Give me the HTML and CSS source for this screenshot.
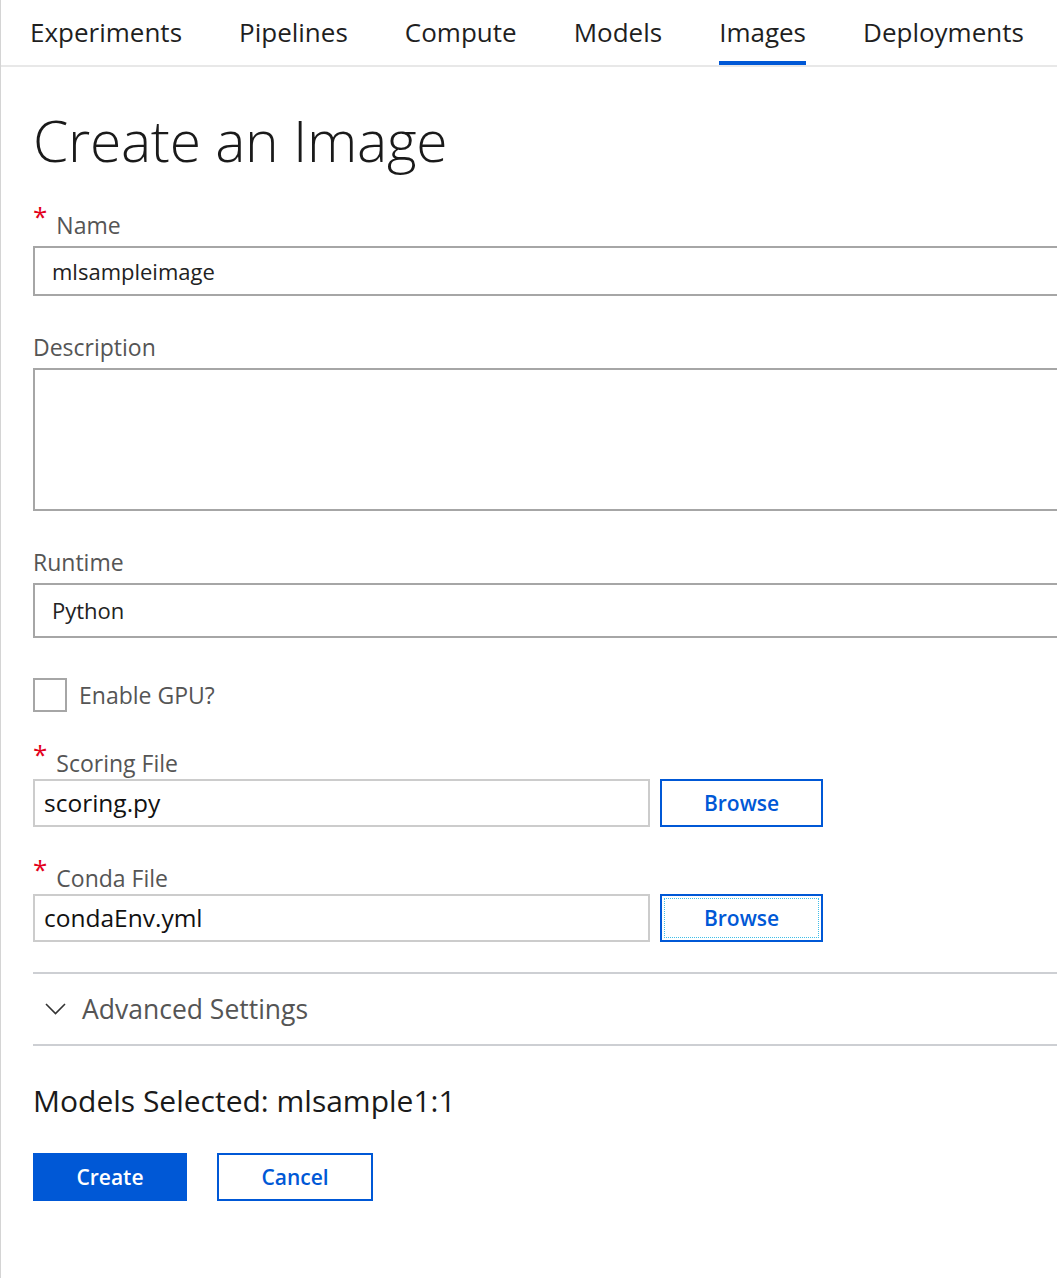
FILE: index.html
```html
<!DOCTYPE html>
<html lang="en">
<head>
<meta charset="utf-8">
<title>Create an Image</title>
<link rel="stylesheet" href="styles.css">
</head>
<body>
<div class="page">
  <nav class="tabs">
    <a class="tab">Experiments</a>
    <a class="tab">Pipelines</a>
    <a class="tab">Compute</a>
    <a class="tab">Models</a>
    <a class="tab active">Images</a>
    <a class="tab">Deployments</a>
  </nav>
  <main class="content">
    <h1 class="title">Create an Image</h1>

    <div class="field first">
      <label class="label"><span class="req">*</span>Name</label>
      <div class="input wide">mlsampleimage</div>
    </div>

    <div class="field">
      <label class="label">Description</label>
      <div class="textarea wide"></div>
    </div>

    <div class="field">
      <label class="label">Runtime</label>
      <div class="select wide">Python</div>
    </div>

    <div class="check-row">
      <span class="checkbox"></span>
      <span class="check-label">Enable GPU?</span>
    </div>

    <div class="field">
      <label class="label"><span class="req">*</span>Scoring File</label>
      <div class="file-row">
        <div class="file-input">scoring.py</div>
        <button class="btn-outline">Browse</button>
      </div>
    </div>

    <div class="field">
      <label class="label"><span class="req">*</span>Conda File</label>
      <div class="file-row">
        <div class="file-input">condaEnv.yml</div>
        <button class="btn-outline focused">Browse</button>
      </div>
    </div>

    <div class="advanced wide">
      <svg class="chevron" width="21" height="12" viewBox="0 0 21 12"><polyline points="1,1 10.5,10.5 20,1" fill="none" stroke="#333" stroke-width="1.6"/></svg>
      <span class="advanced-label">Advanced Settings</span>
    </div>

    <div class="selected">Models Selected: mlsample1:1</div>

    <div class="actions">
      <button class="btn-primary">Create</button>
      <button class="btn-outline cancel">Cancel</button>
    </div>
  </main>
</div>
</body>
</html>
```

FILE: styles.css
```css
html, body {
  margin: 0;
  padding: 0;
  background: #fff;
}
body {
  font-family: "Open Sans", "Noto Sans", "Liberation Sans", sans-serif;
  color: #222;
}
.page {
  border-left: 1px solid #d4d4d4;
  min-height: 1278px;
  box-sizing: border-box;
  overflow: hidden;
}
.tabs {
  display: flex;
  gap: 57px;
  padding-left: 29px;
  height: 65px;
  border-bottom: 2px solid #e8e8e8;
  box-sizing: content-box;
}
.tab {
  display: block;
  font-size: 26px;
  line-height: 36px;
  padding-top: 14px;
  height: 47px;
  border-bottom: 4px solid transparent;
  color: #1f1f1f;
  white-space: nowrap;
}
.tab.active {
  border-bottom-color: #0058d6;
}
.content {
  padding-left: 32px;
}
.title {
  margin: 0;
  padding-top: 33px;
  font-size: 57px;
  font-weight: 300;
  line-height: 80px;
  color: #1a1a1a;
  letter-spacing: -0.3px;
}
.field {
  margin-top: 36px;
}
.field.first {
  margin-top: 30px;
}
.label {
  display: block;
  font-size: 23px;
  line-height: 30px;
  color: #555;
  margin-bottom: 6px;
}
.req {
  color: #e3001b;
  font-size: 26px;
  vertical-align: 8px;
  line-height: 0;
  margin-right: 9px;
}
.input, .select, .textarea {
  box-sizing: border-box;
  border: 2px solid #a6a6a6;
  font-size: 22px;
  color: #222;
  padding-left: 17px;
}
.input {
  height: 50px;
  line-height: 46px;
}
.textarea {
  height: 143px;
}
.select {
  height: 55px;
  line-height: 51px;
}
.wide {
  width: calc(100% + 40px);
  box-sizing: border-box;
}
.check-row {
  display: flex;
  align-items: center;
  gap: 12px;
  margin-top: 40px;
}
.checkbox {
  width: 34px;
  height: 34px;
  box-sizing: border-box;
  border: 2px solid #a6a6a6;
}
.check-label {
  font-size: 23px;
  color: #555;
}
.file-row {
  display: flex;
  gap: 10px;
}
.field .file-row {
  margin-top: -5px;
}
.file-input {
  box-sizing: border-box;
  width: 617px;
  height: 48px;
  border: 2px solid #cccccc;
  font-size: 24.5px;
  line-height: 44px;
  padding-left: 9px;
  color: #111;
}
.btn-outline {
  box-sizing: border-box;
  width: 163px;
  height: 48px;
  border: 2px solid #0058d6;
  background: #fff;
  color: #0058d6;
  font-family: inherit;
  font-size: 21px;
  font-weight: 600;
  padding: 0;
  cursor: pointer;
}
.btn-outline.focused {
  outline: 1px dotted #40bfe8;
  outline-offset: -5px;
}
.advanced {
  margin-top: 30px;
  border-top: 2px solid #cdcfd3;
  border-bottom: 2px solid #cdcfd3;
  height: 74px;
  display: flex;
  align-items: center;
}
.chevron {
  margin-left: 12px;
  margin-right: 16px;
}
.advanced-label {
  font-size: 26.5px;
  color: #555;
}
.selected {
  margin-top: 35px;
  font-size: 30px;
  line-height: 40px;
  color: #1a1a1a;
}
.actions {
  display: flex;
  gap: 30px;
  margin-top: 32px;
}
.btn-primary {
  box-sizing: border-box;
  width: 154px;
  height: 48px;
  border: none;
  background: #0058d6;
  color: #fff;
  font-family: inherit;
  font-size: 21px;
  font-weight: 600;
  padding: 0;
}
.btn-outline.cancel {
  width: 156px;
}
```
